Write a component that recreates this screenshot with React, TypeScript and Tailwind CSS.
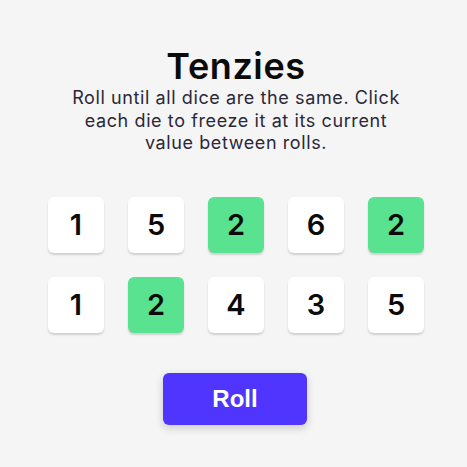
const dice = [
  { value: 1, held: false },
  { value: 5, held: false },
  { value: 2, held: true },
  { value: 6, held: false },
  { value: 2, held: true },
  { value: 1, held: false },
  { value: 2, held: true },
  { value: 4, held: false },
  { value: 3, held: false },
  { value: 5, held: false },
];

const Die = ({ value, held }: { value: number; held: boolean }) => (
  <button
    className={`w-14 h-14 rounded-md shadow-[0_2px_2px_rgba(0,0,0,0.15)] flex items-center justify-center text-[29px] font-semibold text-[#0b0b0b] ${
      held ? 'bg-[#59e391]' : 'bg-white'
    }`}
  >
    {value}
  </button>
);

export default function App() {
  return (
    <div className="w-[467px] h-[467px] bg-[#f5f5f5] font-['Inter',sans-serif] text-[#0b0b0b]">
      <main className="flex flex-col items-center pt-[42px] pl-[5px]">
        {/* 标题 */}
        <h1 className="text-[36px] font-semibold leading-[48px] tracking-[0.6px]">Tenzies</h1>
        <p className="text-center text-[18px] leading-[22.5px] tracking-[0.6px] text-[#2b283a] mt-[-3px]">
          <span className="block">Roll until all dice are the same. Click</span>
          <span className="block">each die to freeze it at its current</span>
          <span className="block">value between rolls.</span>
        </p>

        {/* 骰子 */}
        <div className="grid grid-cols-5 gap-6 mt-[42px]">
          {dice.map((d, i) => (
            <Die key={i} value={d.value} held={d.held} />
          ))}
        </div>

        <button className="mt-10 -ml-[2px] w-36 h-[52px] rounded-md bg-[#5035ff] text-white text-[24px] font-bold font-['Liberation_Sans',sans-serif] shadow-[0_3px_8px_rgba(0,0,0,0.18)]">
          Roll
        </button>
      </main>
    </div>
  );
}
